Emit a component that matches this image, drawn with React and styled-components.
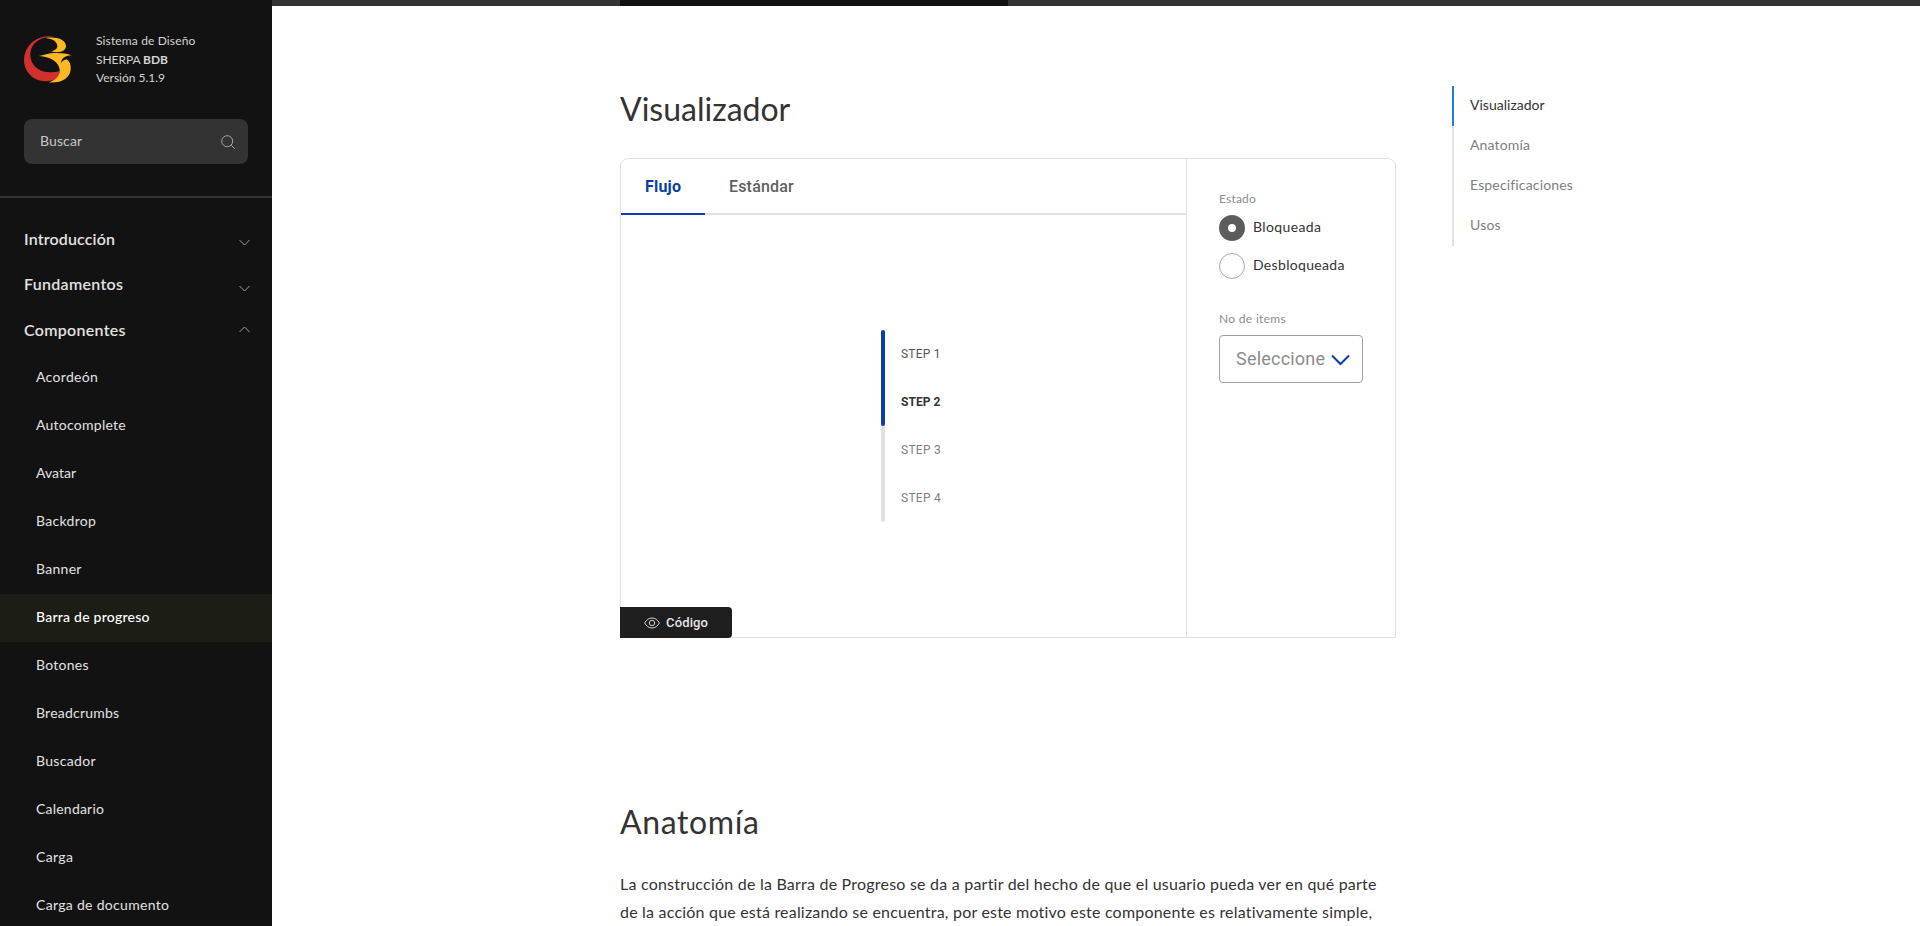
import React from "react";
import styled, { createGlobalStyle } from "styled-components";

const GlobalStyle = createGlobalStyle`
  * { box-sizing: border-box; }
  html, body { margin: 0; height: 100%; overflow: hidden; background: #fff; }
  body { font-family: Lato, "Open Sans", sans-serif; color: #333; }
  h2, p, ul { margin: 0; padding: 0; }
  ul { list-style: none; }
`;

const Label = styled.span`
  letter-spacing: ${({ $track = 0 }) => $track}px;
  white-space: nowrap;
`;

const Page = styled.div`
  display: flex;
  width: 100%;
  height: 926px;
  overflow: hidden;
`;

/* Sidebar */
const Sidebar = styled.aside`
  flex: none;
  width: 272px;
  height: 100%;
  overflow: hidden;
  background: #121212;
  color: #e2e2e2;
`;

const SidebarHeader = styled.header`
  height: 198px;
  padding: 32px 24px 0;
  border-bottom: 2px solid #333;
`;

const Brand = styled.div`
  display: flex;
  align-items: flex-start;
  gap: 24px;
  height: 87px;
`;

const Logo = styled.svg`
  flex: none;
  width: 48px;
  height: 48px;
  margin-top: 4px;
`;

const BrandText = styled.div`
  display: flex;
  flex-direction: column;
  font-size: 12px;
  line-height: 18.5px;
  color: #d4d4d4;

  strong { font-weight: 700; }
`;

const SearchBox = styled.div`
  display: flex;
  align-items: center;
  justify-content: space-between;
  height: 45px;
  padding: 0 12px 2px 16px;
  border-radius: 8px;
  background: #333;
  color: #c8c8c8;
  font-size: 14px;
`;

const SearchIcon = styled.svg`
  width: 16px;
  height: 16px;
  margin-top: 2px;
`;

const Nav = styled.nav`
  padding-top: 19px;
`;

const Section = styled.div`
  display: flex;
  align-items: center;
  justify-content: space-between;
  height: 45.67px;
  padding: 0 22px 3px 24px;
  font-size: 16px;
  font-weight: 600;
`;

const Chevron = styled.svg`
  width: 11px;
  height: 7px;
  margin-top: ${({ $open }) => ($open ? 0 : 9)}px;
`;

const NavItem = styled.li`
  display: flex;
  align-items: center;
  height: 48px;
  padding: 0 0 3px 36px;
  font-size: 14px;
  font-weight: ${({ $active }) => ($active ? 500 : 400)};
  color: ${({ $active }) => ($active ? "#fff" : "#e2e2e2")};
  background: ${({ $active }) => ($active ? "#1c1d14" : "transparent")};
`;

/* Main area */
const Main = styled.main`
  flex: 1;
  min-width: 0;
`;

const TopStrip = styled.div`
  height: 6px;
  padding-left: 348px;
  background: #333;
`;

const TopStripTab = styled.div`
  width: 388px;
  height: 6px;
  background: #111;
`;

const Columns = styled.div`
  display: flex;
  align-items: flex-start;
  gap: 56px;
  padding-left: 348px;
`;

const Content = styled.div`
  width: 776px;
`;

const Title = styled.h2`
  height: 40px;
  margin-top: ${({ $top }) => $top}px;
  font-size: 32px;
  line-height: 40px;
  font-weight: 400;
`;

const Paragraph = styled.p`
  display: flex;
  flex-direction: column;
  margin-top: 28px;
  font-size: 16px;
  line-height: 28px;
`;

const Viewer = styled.section`
  display: flex;
  height: 480px;
  margin-top: 29px;
  border: 1px solid #e1e1e1;
  border-radius: 8px 8px 0 0;
`;

const Stage = styled.div`
  display: flex;
  flex-direction: column;
  width: 565px;
`;

const Tabs = styled.div`
  display: flex;
  height: 56px;
  border-bottom: 2px solid #e1e1e1;
`;

const Tab = styled.div`
  height: 56px;
  padding: 0 24px;
  font-family: Roboto, sans-serif;
  font-size: 16px;
  line-height: 55px;
  font-weight: ${({ $active }) => ($active ? 700 : 500)};
  color: ${({ $active }) => ($active ? "#0b3fa6" : "#606060")};
  border-bottom: 2px solid ${({ $active }) => ($active ? "#0b3fa6" : "transparent")};
  ${({ $active }) => $active && "width: 84px;"}
`;

const Canvas = styled.div`
  display: flex;
  justify-content: flex-start;
  flex: 1;
  padding: 115px 0 0 260px;
`;

const StepTrack = styled.div`
  width: 4px;
  height: 192px;
  border-radius: 2px;
  background: #e1e1e1;
`;

const StepProgress = styled.div`
  width: 4px;
  height: 96px;
  border-radius: 2px;
  background: #0b3fa6;
`;

const Steps = styled.ul`
  padding-left: 16px;
`;

const stepTone = {
  done: { color: "#555", weight: 400 },
  current: { color: "#333", weight: 700 },
  pending: { color: "#808080", weight: 400 },
};

const Step = styled.li`
  height: 48px;
  font-family: Roboto, sans-serif;
  font-size: 12px;
  line-height: 48px;
  font-weight: ${({ $state }) => stepTone[$state].weight};
  color: ${({ $state }) => stepTone[$state].color};
`;

const CodeButton = styled.button`
  display: flex;
  align-items: center;
  flex: none;
  gap: 6px;
  width: 112px;
  height: 31px;
  margin: 0 0 -1px -1px;
  padding: 0 0 0 24px;
  border: 0;
  border-radius: 0 4px 4px 0;
  background: #1e1e1e;
  color: #e6e6e6;
  font-family: Roboto, sans-serif;
  font-size: 13px;
  font-weight: 500;
`;

const EyeIcon = styled.svg`
  width: 16px;
  height: 12px;
`;

const Controls = styled.form`
  flex: 1;
  padding: 32px 32px 0;
  border-left: 1px solid #e1e1e1;
`;

const FieldLabel = styled.div`
  height: 16px;
  margin-top: ${({ $top = 0 }) => $top}px;
  font-size: 12px;
  line-height: 16px;
  color: #8c8c8c;
`;

const RadioRow = styled.label`
  display: flex;
  align-items: center;
  gap: 8px;
  height: 26px;
  margin-top: ${({ $top }) => $top}px;
  font-size: 14px;
`;

const Radio = styled.span`
  width: 26px;
  height: 26px;
  border-radius: 50%;
  border: ${({ $checked }) => ($checked ? "9px solid #5c5c5c" : "1px solid #a8a8a8")};
  background: #fff;
`;

const RadioText = styled(Label)`
  padding-bottom: 3px;
`;

const Select = styled.div`
  display: flex;
  align-items: center;
  justify-content: space-between;
  width: 144px;
  height: 48px;
  margin-top: 8px;
  padding: 0 12px 1px 16px;
  border: 1px solid #a0a0a0;
  border-radius: 4px;
  font-family: Roboto, sans-serif;
  font-size: 18px;
  color: #8c8c8c;
`;

const SelectArrow = styled.svg`
  width: 19px;
  height: 12px;
  margin-top: 3px;
`;

/* Page index */
const Index = styled.ul`
  margin-top: 80px;
`;

const IndexItem = styled.li`
  height: 40px;
  padding-left: 16px;
  border-left: 2px solid ${({ $active }) => ($active ? "#1f80e0" : "#e1e1e1")};
  font-size: 14px;
  line-height: 37px;
  color: ${({ $active }) => ($active ? "#333" : "#808080")};
`;

const sections = [
  { text: "Introducción", track: 0.156 },
  { text: "Fundamentos", track: 0.294 },
  { text: "Componentes", track: 0.282, open: true },
];

const components = [
  ["Acordeón", 0.317],
  ["Autocomplete", 0.253],
  ["Avatar", 0.034],
  ["Backdrop", 0.297],
  ["Banner", 0.277],
  ["Barra de progreso", 0.231],
  ["Botones", 0.269],
  ["Breadcrumbs", 0.216],
  ["Buscador", 0.33],
  ["Calendario", 0.214],
  ["Carga", 0.369],
  ["Carga de documento", 0.309],
];

const steps = [
  ["STEP 1", "done", 0.2],
  ["STEP 2", "current", 0.04],
  ["STEP 3", "pending", 0.27],
  ["STEP 4", "pending", 0.27],
];

const indexItems = [
  ["Visualizador", 0.01],
  ["Anatomía", 0.153],
  ["Especificaciones", 0.156],
  ["Usos", 0.18],
];

function BrandLogo() {
  return (
    <Logo viewBox="0 0 48 48">
      <path
        fill="#d0312f"
        d="M31 1.3C27 0 22.500 0 18.500 1C7.500 3.800 0 13 0 24C0 36 9.500 45.200 21.500 45.200C26.500 45.200 31 44 33.800 41.500C35.200 39.500 35.500 37.500 35.200 35C32.500 36.200 29.500 36.300 26 36.300C14 36.300 6.300 28.500 6.300 18.500C6.300 10.500 11.500 4 20.500 1.700C24 .9 27.500 .8 31 1.300Z"
      />
      <path
        fill="#fdb924"
        d="M21.500 2C32 .3 42 3 42 10.200C42 13.600 38.500 16 33 16.200C31 16.200 29 16 27 15.300C31.500 14.500 33.500 12.500 33.300 9.800C33 5.500 29 2.800 21.500 2Z"
      />
      <path
        fill="#fdb924"
        d="M14.800 20C20 19 24 17.300 29.500 17C36 16.700 42.500 17.200 47.500 19.300C42 19.700 37.500 21.500 36.800 27.500C37.800 25.500 39.500 24 42.500 23.300C45.500 25 47 28.500 46.700 33C46.200 42 38 47.200 25 46.500C32.500 43.500 36 39.500 35.700 34C35.200 26.500 27.500 20.700 14.800 20Z"
      />
    </Logo>
  );
}

export default function App() {
  return (
    <Page>
      <GlobalStyle />
      <Sidebar>
        <SidebarHeader>
          <Brand>
            <BrandLogo />
            <BrandText>
              <Label $track={0.138}>Sistema de Diseño</Label>
              <Label $track={-0.06}>
                SHERPA <strong>BDB</strong>
              </Label>
              <Label>Versión 5.1.9</Label>
            </BrandText>
          </Brand>
          <SearchBox>
            <Label $track={0.117}>Buscar</Label>
            <SearchIcon viewBox="0 0 16 16" fill="none" stroke="#a6a6a6" strokeWidth="1">
              <circle cx="7.200" cy="7.200" r="5.500" />
              <path d="M11.200 11.200L14.700 14.700" />
            </SearchIcon>
          </SearchBox>
        </SidebarHeader>
        <Nav>
          {sections.map((s) => (
            <Section key={s.text}>
              <Label $track={s.track}>{s.text}</Label>
              <Chevron $open={s.open} viewBox="0 0 11 7" fill="none" stroke="#a0a0a0">
                <path d={s.open ? "M.5 6L5.500 1L10.500 6" : "M.5 1L5.500 6L10.500 1"} />
              </Chevron>
            </Section>
          ))}
          <ul>
            {components.map(([text, track]) => (
              <NavItem key={text} $active={text === "Barra de progreso"}>
                <Label $track={track}>{text}</Label>
              </NavItem>
            ))}
          </ul>
        </Nav>
      </Sidebar>
      <Main>
        <TopStrip>
          <TopStripTab />
        </TopStrip>
        <Columns>
          <Content>
            <Title $top={83}>
              <Label>Visualizador</Label>
            </Title>
            <Viewer>
              <Stage>
                <Tabs>
                  <Tab $active>
                    <Label $track={0.215}>Flujo</Label>
                  </Tab>
                  <Tab>
                    <Label $track={0.175}>Estándar</Label>
                  </Tab>
                </Tabs>
                <Canvas>
                  <StepTrack>
                    <StepProgress />
                  </StepTrack>
                  <Steps>
                    {steps.map(([text, state, track]) => (
                      <Step key={text} $state={state}>
                        <Label $track={track}>{text}</Label>
                      </Step>
                    ))}
                  </Steps>
                </Canvas>
                <CodeButton type="button">
                  <EyeIcon viewBox="0 0 16 12" fill="none" stroke="#d0d0d0">
                    <path d="M.6 6C2.500 2.700 5 1 8 1S13.500 2.700 15.400 6C13.500 9.300 11 11 8 11S2.500 9.300 .6 6Z" />
                    <circle cx="8" cy="6" r="2.700" />
                  </EyeIcon>
                  <Label $track={0.15}>Código</Label>
                </CodeButton>
              </Stage>
              <Controls>
                <FieldLabel>
                  <Label $track={0.197}>Estado</Label>
                </FieldLabel>
                <RadioRow $top={8}>
                  <Radio $checked />
                  <RadioText $track={0.377}>Bloqueada</RadioText>
                </RadioRow>
                <RadioRow $top={12}>
                  <Radio />
                  <RadioText $track={0.325}>Desbloqueada</RadioText>
                </RadioRow>
                <FieldLabel $top={32}>
                  <Label $track={0.316}>No de items</Label>
                </FieldLabel>
                <Select>
                  <Label $track={0.213}>Seleccione</Label>
                  <SelectArrow viewBox="0 0 19 12" fill="none" stroke="#0b3fa6" strokeWidth="2">
                    <path d="M1 1.500L9.500 10L18 1.500" />
                  </SelectArrow>
                </Select>
              </Controls>
            </Viewer>
            <Title $top={164}>
              <Label $track={0.616}>Anatomía</Label>
            </Title>
            <Paragraph>
              <Label $track={0.22}>
                La construcción de la Barra de Progreso se da a partir del hecho de que el usuario pueda ver en qué parte
              </Label>
              <Label $track={0.202}>
                de la acción que está realizando se encuentra, por este motivo este componente es relativamente simple,
              </Label>
            </Paragraph>
          </Content>
          <Index>
            {indexItems.map(([text, track], i) => (
              <IndexItem key={text} $active={i === 0}>
                <Label $track={track}>{text}</Label>
              </IndexItem>
            ))}
          </Index>
        </Columns>
      </Main>
    </Page>
  );
}
